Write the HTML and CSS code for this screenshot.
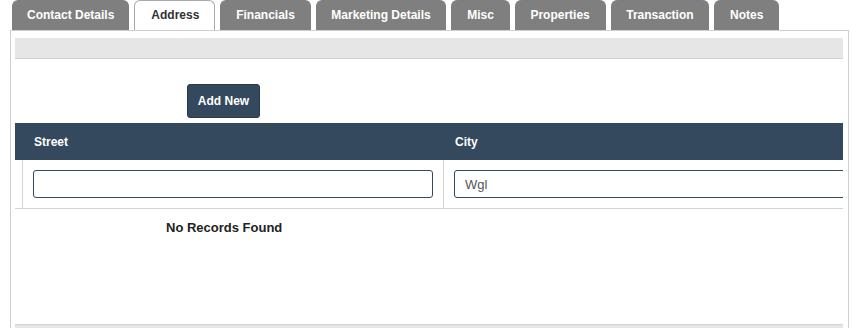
FILE: index.html
```html
<!DOCTYPE html>
<html lang="en">
<head>
  <meta charset="UTF-8" />
  <title>Address</title>
  <link rel="stylesheet" href="styles.css">
</head>
<body>
  <ul class="tabs">
    <li class="tab">Contact Details</li>
    <li class="tab active">Address</li>
    <li class="tab">Financials</li>
    <li class="tab">Marketing Details</li>
    <li class="tab">Misc</li>
    <li class="tab">Properties</li>
    <li class="tab">Transaction</li>
    <li class="tab">Notes</li>
  </ul>

  <div class="panel">
    <div class="toolbar"></div>

    <div class="actions">
      <button class="btn add-btn">Add New</button>
    </div>

    <div class="grid">
      <div class="grid-row head">
        <div class="cell expand"></div>
        <div class="cell">Street</div>
        <div class="cell">City</div>
      </div>
      <div class="grid-row filter">
        <div class="cell expand"></div>
        <div class="cell"><input class="filter-input" type="text" value=""></div>
        <div class="cell"><input class="filter-input wide" type="text" value="Wgl"></div>
      </div>
    </div>

    <div class="empty">No Records Found</div>

    <div class="footer-bar"></div>
  </div>
</body>
</html>
```

FILE: styles.css
```css
body {
  margin: 0;
  padding: 0;
  font-family: 'Liberation Sans', Arial, sans-serif;
  color: #222;
  background: #fff;
  overflow: hidden;
}
.tabs {
  list-style: none;
  margin: 0;
  padding: 0 0 0 12px;
  display: flex;
  height: 30px;
}
.tab {
  box-sizing: border-box;
  height: 30px;
  line-height: 30px;
  padding: 0 15.75px;
  margin-right: 5px;
  background: #7f7f7f;
  border-radius: 6px 6px 0 0;
  color: #fff;
  font-size: 12px;
  font-weight: bold;
  white-space: nowrap;
}
.tab:first-child {
  padding: 0 15px;
}
.tab.active {
  background: #fff;
  color: #333;
  border: 1px solid #a9a9a9;
  border-bottom: none;
  line-height: 29px;
  padding: 0 15px 0 16px;
}
.panel {
  margin-left: 10px;
  width: 839px;
  box-sizing: border-box;
  border: 1px solid #cfcfcf;
  padding: 7px 5px 0 4px;
  height: 330px;
}
.toolbar {
  height: 20px;
  background: #e6e6e6;
  border-bottom: 1px solid #d2d2d2;
}
.actions {
  padding: 25px 0 5px 172px;
}
.btn {
  font-family: 'Liberation Sans', Arial, sans-serif;
  font-size: 12px;
  font-weight: bold;
  border-radius: 3px;
  cursor: pointer;
}
.add-btn {
  width: 73px;
  height: 34px;
  background: #34495e;
  color: #fff;
  border: 1px solid #2a3a4b;
  padding: 0;
}
.grid {
  overflow: hidden;
}
.grid-row {
  display: grid;
  grid-template-columns: 7px 421px 420px;
}
.head {
  background: #34495e;
  height: 37px;
}
.head .cell {
  color: #fff;
  font-size: 12px;
  font-weight: bold;
  line-height: 39px;
  padding-left: 12px;
}
.head .cell.expand {
  padding: 0;
}
.filter {
  border-bottom: 1px solid #d4d4d4;
}
.filter .cell {
  border-left: 1px solid #d4d4d4;
  padding: 10px 10px 10px 10px;
}
.filter .cell.expand {
  border-left: none;
  padding: 0;
}
.filter-input {
  display: block;
  box-sizing: border-box;
  width: 400px;
  height: 28px;
  border: 1px solid #34495e;
  border-radius: 3px;
  padding: 0 10px;
  font-family: 'Liberation Sans', Arial, sans-serif;
  font-size: 13px;
  color: #555;
  outline: none;
}
.filter-input.wide {
  width: 420px;
}
.empty {
  padding: 11px 0 0 151px;
  height: 104px;
  font-size: 13px;
  font-weight: bold;
  line-height: 16px;
  color: #222;
}
.footer-bar {
  height: 20px;
  background: #e6e6e6;
  border-top: 1px solid #d2d2d2;
}
```
